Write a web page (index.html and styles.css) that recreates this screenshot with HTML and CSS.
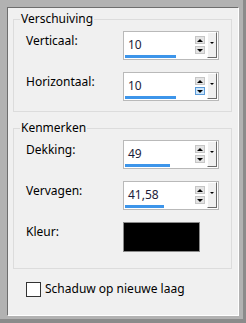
FILE: index.html
```html
<!DOCTYPE html>
<html lang="nl">
<head>
    <meta charset="UTF-8">
    <title>Schaduw</title>
    <link rel="stylesheet" href="styles.css">
</head>
<body>

<div class="window">
    <div class="panel">
        <fieldset class="group">
            <legend>Verschuiving</legend>
            <div class="row">
                <label>Verticaal:</label>
                <div class="spin">
                    <div class="field">
                        <span class="value">10</span>
                        <span class="bar" style="width: 51px"></span>
                    </div>
                    <div class="arrows">
                        <span class="arrow up"></span>
                        <span class="arrow down"></span>
                    </div>
                    <span class="drop"></span>
                </div>
            </div>
            <div class="row">
                <label>Horizontaal:</label>
                <div class="spin">
                    <div class="field">
                        <span class="value">10</span>
                        <span class="bar" style="width: 51px"></span>
                    </div>
                    <div class="arrows">
                        <span class="arrow up"></span>
                        <span class="arrow down hot"></span>
                    </div>
                    <span class="drop"></span>
                </div>
            </div>
        </fieldset>

        <fieldset class="group">
            <legend>Kenmerken</legend>
            <div class="row">
                <label>Dekking:</label>
                <div class="spin">
                    <div class="field">
                        <span class="value">49</span>
                        <span class="bar" style="width: 45px"></span>
                    </div>
                    <div class="arrows">
                        <span class="arrow up"></span>
                        <span class="arrow down"></span>
                    </div>
                    <span class="drop"></span>
                </div>
            </div>
            <div class="row">
                <label>Vervagen:</label>
                <div class="spin">
                    <div class="field">
                        <span class="value">41,58</span>
                        <span class="bar" style="width: 39px"></span>
                    </div>
                    <div class="arrows">
                        <span class="arrow up"></span>
                        <span class="arrow down"></span>
                    </div>
                    <span class="drop"></span>
                </div>
            </div>
            <div class="row color-row">
                <label>Kleur:</label>
                <div class="swatch"></div>
            </div>
        </fieldset>

        <label class="check"><span class="box"></span>Schaduw op nieuwe laag</label>
    </div>
</div>

</body>
</html>
```

FILE: styles.css
```css
body {
    margin: 0;
    font-family: "Noto Sans", "Open Sans", sans-serif;
    font-size: 12px;
    color: #000;
}
.window {
    width: 246px;
    height: 323px;
    box-sizing: border-box;
    background: #b2b2b2;
    border-right: 3px solid #8b8b8b;
    border-bottom: 4px solid #8b8b8b;
    padding: 7px 4px 3px 7px;
}
.panel {
    height: 100%;
    box-sizing: border-box;
    background: #f0f0f0;
    border-top: 1px solid #6e6e6e;
    border-left: 1px solid #6e6e6e;
    border-right: 1px solid #fff;
    border-bottom: 1px solid #fff;
    padding: 3px 6px 0 5px;
}
.group {
    margin: 0;
    border: 1px solid #dcdcdc;
    padding: 4px 0 10px 12px;
}
.group + .group {
    margin-top: 8px;
}
.group legend {
    padding: 0 1px;
    margin-left: -6px;
    line-height: 16px;
}
.row {
    display: grid;
    grid-template-columns: 97px 96px;
    height: 29px;
}
.row + .row {
    margin-top: 12px;
}
.color-row {
    margin-bottom: 7px;
}
.row label {
    line-height: 16px;
    padding-top: 2px;
}
.spin {
    display: flex;
    box-sizing: border-box;
    height: 29px;
    border: 1px solid #b9b9b9;
    background: #fff;
}
.field {
    flex: 1;
    display: flex;
    flex-direction: column;
    justify-content: space-between;
    padding: 5px 0 1px 1px;
}
.value {
    padding-left: 3px;
    line-height: 16px;
    color: #1c1c3a;
}
.bar {
    height: 3px;
    background: #3d95ea;
}
.arrows {
    display: flex;
    flex-direction: column;
    gap: 2px;
    padding-top: 4px;
    margin-right: 2px;
}
.arrow {
    width: 10px;
    height: 8px;
    box-sizing: border-box;
    border: 1px solid #c6c6c6;
    background: #e4e4e4;
    display: flex;
    align-items: center;
    justify-content: center;
}
.arrow::after {
    content: "";
    border-left: 3px solid transparent;
    border-right: 3px solid transparent;
}
.up::after {
    border-bottom: 3px solid #000;
}
.down::after {
    border-top: 3px solid #000;
}
.arrow.hot {
    background: #cde6fb;
    border-color: #5a9ad8;
}
.drop {
    width: 10px;
    height: 26px;
    box-sizing: border-box;
    margin-right: 1px;
    background: #f0f0f0;
    border-top: 1px solid #fff;
    border-left: 1px solid #fff;
    border-right: 1px solid #6a6a6a;
    border-bottom: 1px solid #6a6a6a;
    position: relative;
}
.drop::after {
    content: "";
    position: absolute;
    left: 2px;
    top: 9px;
    border-left: 2px solid transparent;
    border-right: 2px solid transparent;
    border-top: 2px solid #000;
}
.swatch {
    width: 77px;
    height: 30px;
    box-sizing: border-box;
    background: #000;
    border: 1px solid #8a8a8a;
}
.check {
    display: flex;
    align-items: center;
    gap: 4px;
    margin: 12px 0 0 13px;
    line-height: 16px;
}
.check .box {
    width: 15px;
    height: 15px;
    box-sizing: border-box;
    border: 1px solid #333;
    background: #fff;
}
```
